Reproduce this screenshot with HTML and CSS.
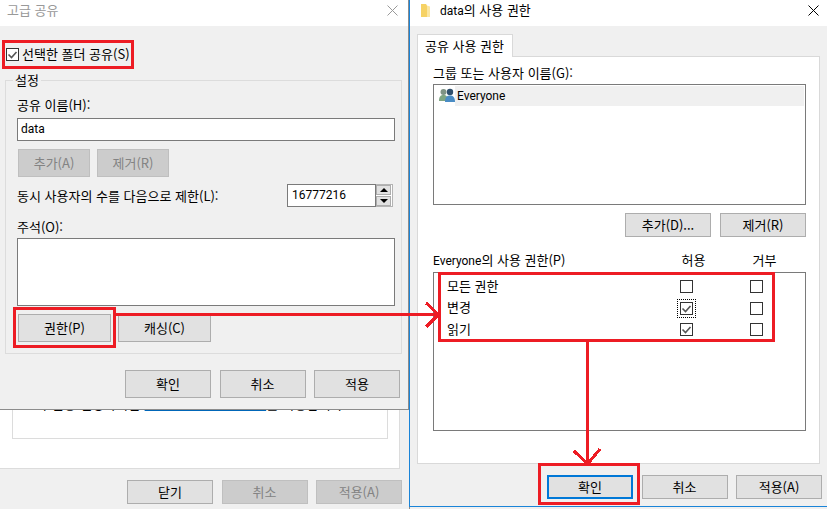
FILE: index.html
```html
<!DOCTYPE html>
<html lang="ko">
<head>
<meta charset="utf-8">
<title>고급 공유</title>
<link rel="stylesheet" href="styles.css">
</head>
<body>
<svg class="defs" width="0" height="0" aria-hidden="true">
  <symbol id="x" viewBox="0 0 11 11"><path d="M.5.5l10 10M10.5.5l-10 10" fill="none" stroke="currentColor" stroke-width="1"/></symbol>
  <symbol id="tick" viewBox="0 0 13 13"><path d="M2.5 6.5l3 3 5-5.5" fill="none" stroke="#555" stroke-width="1.6"/></symbol>
</svg>
<main class="desktop">

  <section class="win back">
    <div class="back-panel">
      <div class="back-box">
        <p class="back-text">이 설정 변경하려면 <a class="link">네트워크 및 공유 센터</a>를 사용합니다.</p>
      </div>
    </div>
    <div class="footer back-footer">
      <button class="btn wide">닫기</button>
      <button class="btn wide off">취소</button>
      <button class="btn wide off">적용(A)</button>
    </div>
  </section>

  <section class="win share">
    <header class="title">
      <span class="title-muted">고급 공유</span>
      <svg class="close muted"><use href="#x"/></svg>
    </header>
    <label class="share-check">
      <span class="box"><svg class="tick"><use href="#tick"/></svg></span>
      <span>선택한 폴더 공유(S)</span>
    </label>
    <fieldset class="group">
      <legend>설정</legend>
      <div class="label first">공유 이름(H):</div>
      <div class="field name latin">data</div>
      <div class="btn-row r1">
        <button class="btn small off">추가(A)</button>
        <button class="btn small off">제거(R)</button>
      </div>
      <div class="limit">
        <span>동시 사용자의 수를 다음으로 제한(L):</span>
        <div class="spinner">
          <div class="field spin-value latin">16777216</div>
          <div class="spin-btns">
            <span class="spin-btn"><i class="up"></i></span>
            <span class="spin-btn"><i class="down"></i></span>
          </div>
        </div>
      </div>
      <div class="label note">주석(O):</div>
      <div class="field memo"></div>
      <div class="btn-row r2">
        <button class="btn mid">권한(P)</button>
        <button class="btn mid">캐싱(C)</button>
      </div>
    </fieldset>
    <div class="footer share-footer">
      <button class="btn wide tall">확인</button>
      <button class="btn wide tall">취소</button>
      <button class="btn wide tall">적용</button>
    </div>
  </section>

  <section class="win perm">
    <header class="title">
      <span class="title-main">
        <svg class="folder" viewBox="0 0 10 13"><path d="M0 0h5l1 1.5V13H0z" fill="#f6d264"/><path d="M6 1.5l3 1V13H6z" fill="#fbe6a2"/></svg>
        <span><span class="latin">data</span>의 사용 권한</span>
      </span>
      <svg class="close"><use href="#x"/></svg>
    </header>
    <div class="tab">공유 사용 권한</div>
    <div class="panel">
      <div class="label p1">그룹 또는 사용자 이름(G):</div>
      <div class="field users">
        <svg class="people" viewBox="0 0 16 15">
          <circle cx="4.5" cy="4" r="3" fill="#7f9384"/><path d="M0 13c0-5 2-6 4.500-6S9 8 9 13z" fill="#7ea583"/>
          <circle cx="11" cy="4" r="3.200" fill="#2f4f6c"/><path d="M6 14c0-5 2-6.500 5-6.500s5 1.500 5 6.500z" fill="#4a8cc4"/>
        </svg>
        <span class="user-row latin">Everyone</span>
      </div>
      <div class="btn-row r3">
        <button class="btn wide">추가(D)...</button>
        <button class="btn wide">제거(R)</button>
      </div>
      <div class="perm-head">
        <span class="perm-title"><span class="latin">Everyone</span>의 사용 권한(P)</span>
        <span class="perm-col">허용</span>
        <span class="perm-col">거부</span>
      </div>
      <div class="field perms">
        <div class="perm-row">
          <span class="perm-name">모든 권한</span>
          <span class="cell"><span class="box"></span></span>
          <span class="cell"><span class="box"></span></span>
        </div>
        <div class="perm-row">
          <span class="perm-name">변경</span>
          <span class="cell"><span class="box focus"><svg class="tick"><use href="#tick"/></svg></span></span>
          <span class="cell"><span class="box"></span></span>
        </div>
        <div class="perm-row">
          <span class="perm-name">읽기</span>
          <span class="cell"><span class="box"><svg class="tick"><use href="#tick"/></svg></span></span>
          <span class="cell"><span class="box"></span></span>
        </div>
      </div>
    </div>
    <div class="footer perm-footer">
      <button class="btn wide default">확인</button>
      <button class="btn wide">취소</button>
      <button class="btn wide">적용(A)</button>
    </div>
  </section>

  <svg class="marks" viewBox="0 0 827 509" aria-hidden="true">
    <g fill="none" stroke="#ed1c24" stroke-width="3" shape-rendering="crispEdges">
      <rect x="3.500" y="41.500" width="129" height="26"/>
      <rect x="14.500" y="308.500" width="100" height="38"/>
      <rect x="439.500" y="273.500" width="334" height="67"/>
      <rect x="539.500" y="464.500" width="99" height="39"/>
      <path d="M116 314.500H438M426 303l12.500 11.500L426 327"/>
      <path d="M587.500 342V464M574 451l13.500 13L600 449"/>
    </g>
  </svg>
</main>
</body>
</html>
```
FILE: styles.css
```css
* { box-sizing: border-box; }
html, body { margin: 0; padding: 0; }
body {
  width: 827px;
  height: 509px;
  overflow: hidden;
  background: #f0f0f0;
  color: #000;
  font: 13px/18px "Noto Sans CJK KR", "Noto Sans", sans-serif;
}
.defs { position: absolute; }
.latin { font-family: Roboto, "Noto Sans CJK KR", sans-serif; font-size: 12px; }
.desktop { position: relative; width: 827px; height: 509px; overflow: hidden; }
.win { position: absolute; top: 0; background: #f0f0f0; }

/* window behind */
.back {
  left: 0;
  width: 410px;
  height: 509px;
  border-right: 1px solid #8c8c8c;
  padding-top: 300px;
}
.back-panel {
  width: 400px;
  height: 169px;
  background: #fff;
  border-right: 1px solid #dcdcdc;
  border-bottom: 1px solid #dcdcdc;
  padding-left: 12px;
}
.back-box {
  width: 376px;
  height: 139px;
  border: 1px solid #dcdcdc;
  border-top: 0;
  padding: 95px 0 0 22px;
  white-space: nowrap;
  word-spacing: 1px;
}
.back-text { margin: 0; }
.link { color: #0066b8; text-decoration: underline; }
.footer { display: flex; justify-content: flex-end; gap: 8.5px; }
.back-footer { margin-top: 11px; padding-right: 7px; }
.back-footer .btn { height: 23px; }

/* 고급 공유 */
.share {
  left: 0;
  width: 409px;
  height: 410px;
  border-right: 1px solid #8c8c8c;
  border-bottom: 1px solid #8c8c8c;
}
.title {
  height: 26px;
  background: #fff;
  display: flex;
  align-items: center;
  justify-content: space-between;
}
.share .title { padding: 0 10px 6px 7px; }
.perm .title { padding: 0 8px 6px 11px; }
.title-muted { color: #999; }
.title-main { display: flex; align-items: center; gap: 9px; }
.folder { width: 10px; height: 13px; }
.close { width: 11px; height: 11px; color: #000; }
.close.muted { color: #999; }

.box {
  position: relative;
  display: block;
  width: 13px;
  height: 13px;
  border: 1px solid #333;
  background: #fff;
  flex: none;
}
.tick { position: absolute; left: -1px; top: -1px; width: 13px; height: 13px; }
.focus { outline: 1px dotted #000; outline-offset: 2px; }

.share-check {
  display: flex;
  align-items: center;
  gap: 3px;
  height: 18px;
  margin: 19px 0 0 6px;
}
.group {
  margin: 8px 0 0 5px;
  width: 397px;
  padding: 0 6px 11px 11px;
  border: 1px solid #dcdcdc;
  min-width: 0;
}
.group legend { margin-left: -4px; padding: 0 2px; line-height: 18px; height: 18px; }
.label { height: 18px; }
.label.first { margin-top: 7px; }
.field { background: #fff; border: 1px solid #7a7a7a; }
.name { height: 23px; width: 378px; margin-top: 4px; padding: 0 3px; line-height: 21px; }
.btn-row { display: flex; }
.btn {
  margin: 0;
  padding: 0;
  background: #e1e1e1;
  border: 1px solid #adadad;
  color: #000;
  font: inherit;
  line-height: 16px;
}
.btn.off { background: #cccccc; border-color: #bfbfbf; color: #838383; }
.btn.small { width: 72px; height: 28px; }
.btn.mid { width: 93px; height: 28px; }
.btn.wide { width: 86px; height: 24px; }
.btn.wide.tall { height: 28px; }
.r1 { margin: 8px 0 0 1px; gap: 7px; }
.r2 { margin: 8px 0 0 1px; gap: 7px; }
.limit {
  display: flex;
  align-items: center;
  justify-content: space-between;
  width: 376px;
  height: 23px;
  margin-top: 7px;
}
.spinner { display: flex; width: 106px; height: 23px; }
.spin-value { width: 89px; height: 23px; padding: 0 4px; line-height: 21px; }
.spin-btns {
  width: 17px;
  height: 23px;
  border: 1px solid #b4b4b4;
  border-left: 0;
  display: flex;
  flex-direction: column;
  gap: 1px;
  padding: 0 1px 0 0;
  background: #fff;
}
.spin-btn {
  flex: 1;
  background: #e1e1e1;
  border: 1px solid #adadad;
  display: flex;
  align-items: center;
  justify-content: center;
}
.spin-btn i { width: 0; height: 0; border-left: 4px solid transparent; border-right: 4px solid transparent; }
.spin-btn .up { border-bottom: 4px solid #000; }
.spin-btn .down { border-top: 4px solid #000; }
.label.note { margin-top: 11px; }
.memo { width: 378px; height: 68px; margin-top: 2px; }
.share-footer { margin-top: 16px; padding-right: 8px; }

/* 사용 권한 */
.perm {
  left: 409px;
  width: 418px;
  height: 507px;
  border-left: 1px solid #1a84d8;
  border-bottom: 1px solid #1a84d8;
}
.tab {
  position: relative;
  z-index: 1;
  width: 96px;
  height: 23px;
  margin: 8px 0 0 7px;
  padding-left: 7px;
  background: #fff;
  border: 1px solid #d9d9d9;
  border-bottom: 0;
  white-space: nowrap;
  line-height: 21px;
}
.panel {
  width: 403px;
  height: 408px;
  margin: -1px 0 0 7px;
  padding: 0 0 0 15px;
  background: #fff;
  border: 1px solid #d9d9d9;
}
.p1 { margin-top: 7px; }
.users {
  position: relative;
  width: 373px;
  height: 121px;
  margin-top: 2px;
  padding: 1px 1px 0 21px;
}
.people { position: absolute; left: 5px; top: 3px; width: 16px; height: 15px; }
.user-row { display: block; height: 20px; line-height: 20px; background: #f0f0f0; padding-left: 2px; }
.r3 { justify-content: flex-end; gap: 9px; width: 373px; margin-top: 8px; }
.perm-head { display: flex; height: 18px; width: 367px; margin-top: 14px; }
.perm-title { flex: 1; }
.perm-col { width: 71px; text-align: center; }
.perms {
  width: 373px;
  height: 159px;
  margin-top: 3px;
  padding: 3px 14px 0 13px;
}
.perm-row { display: flex; align-items: center; height: 21.5px; }
.perm-name { flex: 1; padding-bottom: 2px; }
.cell { width: 70px; padding-left: 29px; }
.perm-footer { margin-top: 11px; padding-right: 5px; }
.btn.default { border: 2px solid #0078d7; }

/* 주석 표시 */
.marks { position: absolute; left: 0; top: 0; width: 827px; height: 509px; pointer-events: none; }
```
